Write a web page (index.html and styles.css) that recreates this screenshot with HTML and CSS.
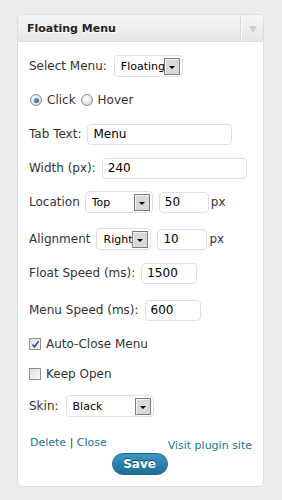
FILE: index.html
```html
<!DOCTYPE html>
<html lang="en">
<head>
    <meta charset="UTF-8">
    <title>Floating Menu widget</title>
    <link rel="stylesheet" href="styles.css">
</head>
<body>
    <div class="widget">
        <div class="widget-top">
            <h3 class="widget-title">Floating Menu</h3>
            <div class="toggle"><span class="toggle-arrow"></span></div>
        </div>

        <div class="widget-inside">
            <div class="field">
                <span>Select Menu:</span>
                <div class="select select-menu"><span class="value">Floating</span><span class="arrow"></span></div>
            </div>

            <div class="field radios">
                <span class="radio checked"></span><span>Click</span>
                <span class="radio"></span><span>Hover</span>
            </div>

            <div class="field">
                <span>Tab Text:</span>
                <input class="text wide" type="text" value="Menu">
            </div>

            <div class="field">
                <span>Width (px):</span>
                <input class="text wide" type="text" value="240">
            </div>

            <div class="field loose">
                <span>Location</span>
                <div class="select select-location"><span class="value">Top</span><span class="arrow"></span></div>
                <input class="text small" type="text" value="50">
                <span class="unit">px</span>
            </div>

            <div class="field">
                <span>Alignment</span>
                <div class="select select-align"><span class="value">Right</span><span class="arrow"></span></div>
                <input class="text small" type="text" value="10">
                <span class="unit">px</span>
            </div>

            <div class="field loose">
                <span>Float Speed (ms):</span>
                <input class="text speed" type="text" value="1500">
            </div>

            <div class="field">
                <span>Menu Speed (ms):</span>
                <input class="text speed" type="text" value="600">
            </div>

            <div class="field check-row auto-close">
                <span class="check checked">
                    <svg width="9" height="9" viewBox="0 0 9 9"><path d="M1.5 4.5 L3.5 7 L7.5 1.2" fill="none" stroke="#2b4b8c" stroke-width="1.6"/></svg>
                </span>
                <span>Auto-Close Menu</span>
            </div>

            <div class="field check-row keep-open">
                <span class="check"></span>
                <span>Keep Open</span>
            </div>

            <div class="field skin">
                <span>Skin:</span>
                <div class="select select-skin"><span class="value">Black</span><span class="arrow"></span></div>
            </div>

            <div class="links">
                <div class="left-links"><a href="#">Delete</a> | <a href="#">Close</a></div>
                <a class="visit" href="#">Visit plugin site</a>
            </div>

            <div class="actions">
                <button class="save">Save</button>
            </div>
        </div>
    </div>
</body>
</html>
```

FILE: styles.css
```css
body {
    margin: 0;
    background-color: #ececec;
    font-family: 'DejaVu Sans', Verdana, sans-serif;
    font-size: 12px;
    color: #333;
}

.widget {
    width: 245px;
    margin: 14px 0 0 17px;
    background-color: #fff;
    border: 1px solid #dcdcdc;
    border-radius: 6px;
}

.widget-top {
    display: flex;
    height: 26px;
    background: linear-gradient(#f6f6f6, #e6e6e6);
    border-bottom: 1px solid #dfdfdf;
    border-radius: 6px 6px 0 0;
}

.widget-title {
    flex: 1;
    margin: 0;
    padding-left: 9px;
    font-size: 11px;
    font-weight: bold;
    line-height: 27px;
    color: #222;
    text-shadow: 0 1px 0 #fff;
}

.toggle {
    width: 21px;
    display: flex;
    align-items: center;
    justify-content: center;
    border-left: 1px solid #f8f8f8;
    box-shadow: -1px 0 0 #dadada;
}

.toggle-arrow {
    width: 0;
    height: 0;
    margin-top: 2px;
    border-left: 4px solid transparent;
    border-right: 4px solid transparent;
    border-top: 7px solid #cfcfcf;
}

.widget-inside {
    padding: 12px 11px 11px 11px;
}

.field {
    display: flex;
    align-items: center;
    gap: 6px;
    height: 24px;
    margin-bottom: 10px;
}

/* rows followed by a slightly bigger gap */
.field.loose {
    margin-bottom: 13px;
}

.text {
    height: 21px;
    box-sizing: border-box;
    border: 1px solid #dfdfdf;
    border-radius: 4px;
    padding: 0 5px;
    font-family: 'DejaVu Sans', Verdana, sans-serif;
    font-size: 12px;
    color: #000;
    background: #fff;
    outline: none;
}

.text.wide {
    width: 145px;
}

.text.small {
    width: 50px;
}

.text.speed {
    width: 56px;
}

.unit {
    margin-left: -4px;
}

.select {
    display: flex;
    align-items: center;
    height: 22px;
    box-sizing: border-box;
    border: 1px solid #dfdfdf;
    border-radius: 4px;
    background: #fff;
    padding: 0 2px 0 6px;
    font-size: 11px;
    color: #000;
}

.select .value {
    flex: 1;
    overflow: hidden;
    white-space: nowrap;
}

.select .arrow {
    flex: none;
    width: 14px;
    height: 15px;
    display: flex;
    align-items: center;
    justify-content: center;
    border: 1px solid #7c7c7c;
    background: #d9d9d9;
    box-shadow: inset 1px 1px 0 #f4f4f4;
}

.select .arrow::after {
    content: '';
    margin-top: 2px;
    border-left: 3px solid transparent;
    border-right: 3px solid transparent;
    border-top: 3px solid #000;
}

.select-menu {
    width: 69px;
    margin-left: 1px;
}

.select-location {
    width: 68px;
    margin-left: -1px;
}

.select-align {
    width: 55px;
}

.select-skin {
    width: 88px;
    margin-left: 1px;
}

.radios {
    gap: 5px;
    padding-left: 1px;
}

.radio {
    width: 10px;
    height: 10px;
    border: 1px solid #8c8c8c;
    border-radius: 50%;
    background: radial-gradient(circle at 40% 35%, #fff, #d4d4d4);
    display: flex;
    align-items: center;
    justify-content: center;
}

.radio.checked::after {
    content: '';
    width: 5px;
    height: 5px;
    border-radius: 50%;
    background: radial-gradient(circle at 40% 35%, #6aa0d8, #1d4f8c);
}

.check-row {
    gap: 5px;
}

.check {
    width: 10px;
    height: 10px;
    border: 1px solid #8e8f8f;
    background: linear-gradient(135deg, #e0e0e0, #fafafa);
    display: flex;
    align-items: center;
    justify-content: center;
}

.auto-close {
    margin-bottom: 6px;
}

.keep-open {
    margin-bottom: 8px;
}

.skin {
    margin-bottom: 18px;
}

.links {
    display: flex;
    justify-content: space-between;
    height: 17px;
    font-size: 11px;
    padding-left: 1px;
}

.left-links {
    align-self: flex-start;
    line-height: 14px;
}

.links a {
    color: #21759b;
    text-decoration: none;
}

.visit {
    align-self: flex-end;
    line-height: 14px;
}

.actions {
    display: flex;
    justify-content: center;
    padding-right: 2px;
}

.save {
    width: 56px;
    height: 22px;
    border: 1px solid #1e6a91;
    border-radius: 11px;
    background: linear-gradient(#3d97c6, #1d6c95);
    color: #fff;
    font-family: 'DejaVu Sans', Verdana, sans-serif;
    font-size: 12px;
    font-weight: bold;
    text-shadow: 0 -1px 0 #0f4766;
    padding: 0;
    cursor: pointer;
}
```
